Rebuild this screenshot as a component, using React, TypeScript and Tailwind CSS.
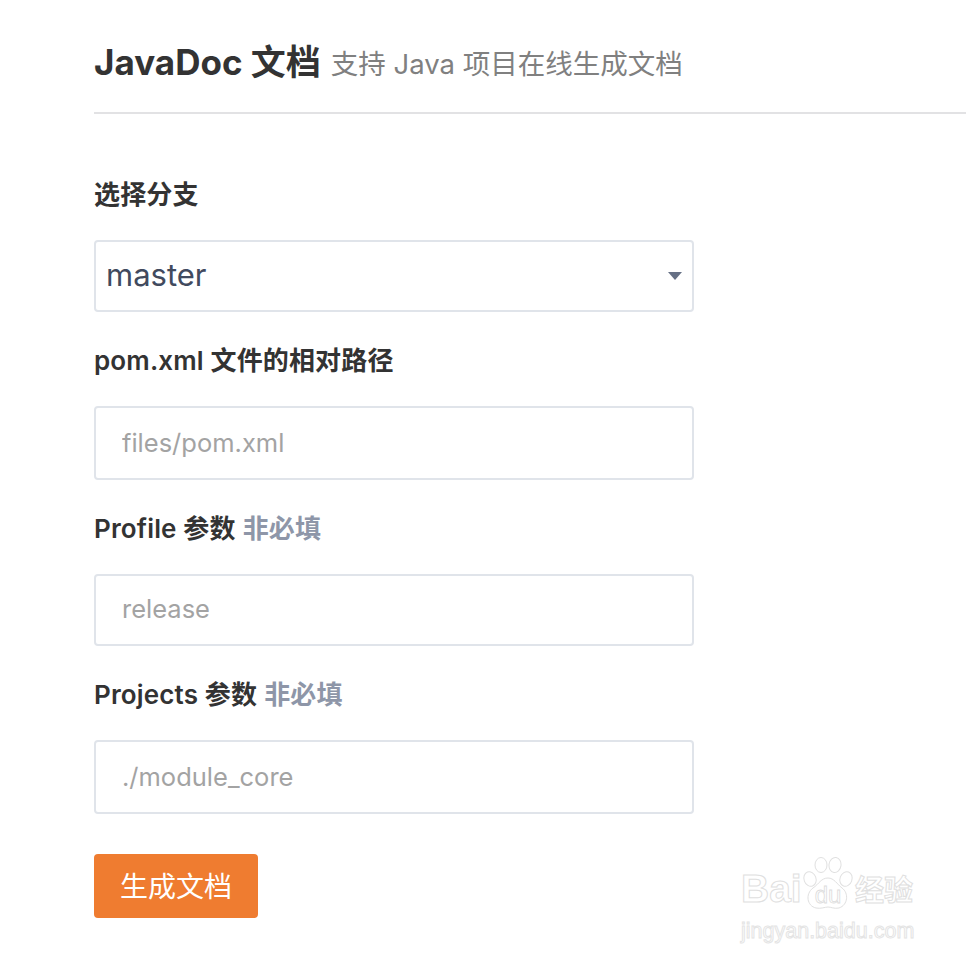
import { ChangeEvent, useState } from "react";

const fontStack = "font-['Inter','Noto_Sans_CJK_SC',sans-serif]";

function Label({ text, hint }: { text: string; hint?: string }) {
  return (
    <label className="block h-[36px] text-[26px] leading-[34px] font-semibold tracking-[0.15px] text-[#333333]">
      {text}
      {hint && <span className="ml-[7px] text-[#8e96a8]">{hint}</span>}
    </label>
  );
}

function TextField({ placeholder, size }: { placeholder: string; size: string }) {
  const [value, setValue] = useState("");
  return (
    <input
      value={value}
      onChange={(e: ChangeEvent<HTMLInputElement>) => setValue(e.target.value)}
      placeholder={placeholder}
      className={`${size} block w-[600px] rounded-[4px] border-2 border-[#e0e4ea] bg-white px-[26px] text-[25.5px] text-[#333333] outline-none placeholder:text-[#a3a3a3]`}
    />
  );
}

function Watermark() {
  return (
    <div className="pointer-events-none absolute top-[857px] left-[741px] w-[176px] font-['Liberation_Sans','Noto_Sans_CJK_SC',sans-serif] text-white">
      <div className="flex h-[54px] items-end">
        <span className="w-[61px] text-[39px] leading-[44px] font-bold [-webkit-text-stroke:1px_#e0e0e0]">Bai</span>
        <svg width="52" height="54" viewBox="0 0 52 54" fill="white" stroke="#e0e0e0" strokeWidth="1">
          <ellipse cx="8" cy="22" rx="6" ry="7.5" transform="rotate(-20 8 22)" />
          <ellipse cx="19" cy="8" rx="6" ry="7.5" />
          <ellipse cx="33" cy="8" rx="6" ry="7.5" transform="rotate(8 33 8)" />
          <ellipse cx="44" cy="22" rx="6" ry="7.5" transform="rotate(20 44 22)" />
          <path d="M26 21c6 0 9 6 14 10 7 5 6 17-3 20-5 1-8-1-11-1s-7 2-12 1C5 49 3 37 11 31c6-4 8-10 15-10z" />
          <text x="26" y="46" textAnchor="middle" fontSize="24" fontFamily="Liberation Sans" fill="white" stroke="#dcdcdc" strokeWidth="0.8">du</text>
        </svg>
        <span className="ml-[1px] text-[29px] leading-[40px] font-bold whitespace-nowrap [-webkit-text-stroke:1px_#e0e0e0]">经验</span>
      </div>
      <div className="mt-[7px] text-[21.5px] leading-[26px] whitespace-nowrap [-webkit-text-stroke:1px_#e4e4e4]">jingyan.baidu.com</div>
    </div>
  );
}

export default function App() {
  return (
    <div className={`relative h-[960px] w-[966px] overflow-hidden bg-white pl-[94px] ${fontStack}`}>
      <header className="flex h-[114px] items-start border-b-2 border-[#e2e2e4] pt-[36px]">
        <h1 className="text-[35px] leading-[52px] font-bold text-[#333333]">JavaDoc 文档</h1>
        <span className="ml-[10px] pt-[2px] text-[27.5px] leading-[52px] text-[#808080]">支持 Java 项目在线生成文档</span>
      </header>

      <form className="w-[600px]">
        <div className="mt-[64px]">
          <Label text="选择分支" />
        </div>
        <div className="relative mt-[26px] flex h-[72px] items-center rounded-[4px] border-2 border-[#e0e4ea] bg-white pb-[2px] pl-[10px] text-[31px] text-[#414a5e]">
          master
          <svg width="16" height="10" viewBox="0 0 16 10" className="absolute top-[29px] right-[9px]">
            <path d="M1 1h14L8 9z" fill="#667085" />
          </svg>
        </div>

        <div className="mt-[32px]">
          <Label text="pom.xml 文件的相对路径" />
        </div>
        <div className="mt-[26px]">
          <TextField placeholder="files/pom.xml" size="h-[74px] pb-[2px]" />
        </div>

        <div className="mt-[32px]">
          <Label text="Profile 参数" hint="非必填" />
        </div>
        <div className="mt-[26px]">
          <TextField placeholder="release" size="h-[72px] pb-[4px]" />
        </div>

        <div className="mt-[32px]">
          <Label text="Projects 参数" hint="非必填" />
        </div>
        <div className="mt-[26px]">
          <TextField placeholder="./module_core" size="h-[74px] pb-[2px]" />
        </div>

        <button
          type="button"
          className="mt-[40px] h-[64px] w-[164px] rounded-[4px] bg-[#ef7c30] pt-[2px] text-[28px] text-white"
        >
          生成文档
        </button>
      </form>

      <Watermark />
    </div>
  );
}
